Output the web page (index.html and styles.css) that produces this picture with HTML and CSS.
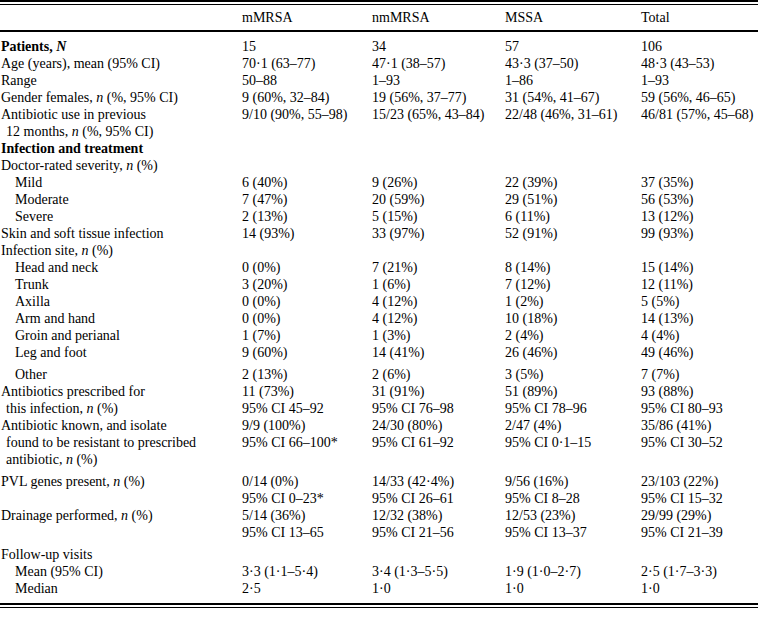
FILE: index.html
```html
<!DOCTYPE html>
<html>
<head>
<meta charset="utf-8">
<link rel="stylesheet" href="styles.css">
</head>
<body>
<div class="frame">
<table class="data">
<colgroup>
<col class="c-label"><col class="c-a"><col class="c-b"><col class="c-c"><col class="c-d">
</colgroup>
<thead>
<tr class="head"><th></th><th>mMRSA</th><th>nmMRSA</th><th>MSSA</th><th>Total</th></tr>
</thead>
<tbody>
<tr class="first"><td class="lbl"><b>Patients, <i>N</i></b></td><td>15</td><td>34</td><td>57</td><td>106</td></tr>
<tr><td class="lbl">Age (years), mean (95% CI)</td><td>70·1 (63–77)</td><td>47·1 (38–57)</td><td>43·3 (37–50)</td><td>48·3 (43–53)</td></tr>
<tr><td class="lbl">Range</td><td>50–88</td><td>1–93</td><td>1–86</td><td>1–93</td></tr>
<tr><td class="lbl">Gender females, <i>n</i> (%, 95% CI)</td><td>9 (60%, 32–84)</td><td>19 (56%, 37–77)</td><td>31 (54%, 41–67)</td><td>59 (56%, 46–65)</td></tr>
<tr><td class="lbl">Antibiotic use in previous<br>12 months, <i>n</i> (%, 95% CI)</td><td>9/10 (90%, 55–98)</td><td>15/23 (65%, 43–84)</td><td>22/48 (46%, 31–61)</td><td>46/81 (57%, 45–68)</td></tr>
<tr><td class="lbl"><b>Infection and treatment</b></td><td></td><td></td><td></td><td></td></tr>
<tr><td class="lbl">Doctor-rated severity, <i>n</i> (%)</td><td></td><td></td><td></td><td></td></tr>
<tr><td class="lbl sub">Mild</td><td>6 (40%)</td><td>9 (26%)</td><td>22 (39%)</td><td>37 (35%)</td></tr>
<tr><td class="lbl sub">Moderate</td><td>7 (47%)</td><td>20 (59%)</td><td>29 (51%)</td><td>56 (53%)</td></tr>
<tr><td class="lbl sub">Severe</td><td>2 (13%)</td><td>5 (15%)</td><td>6 (11%)</td><td>13 (12%)</td></tr>
<tr><td class="lbl">Skin and soft tissue infection</td><td>14 (93%)</td><td>33 (97%)</td><td>52 (91%)</td><td>99 (93%)</td></tr>
<tr><td class="lbl">Infection site, <i>n</i> (%)</td><td></td><td></td><td></td><td></td></tr>
<tr><td class="lbl sub">Head and neck</td><td>0 (0%)</td><td>7 (21%)</td><td>8 (14%)</td><td>15 (14%)</td></tr>
<tr><td class="lbl sub">Trunk</td><td>3 (20%)</td><td>1 (6%)</td><td>7 (12%)</td><td>12 (11%)</td></tr>
<tr><td class="lbl sub">Axilla</td><td>0 (0%)</td><td>4 (12%)</td><td>1 (2%)</td><td>5 (5%)</td></tr>
<tr><td class="lbl sub">Arm and hand</td><td>0 (0%)</td><td>4 (12%)</td><td>10 (18%)</td><td>14 (13%)</td></tr>
<tr><td class="lbl sub">Groin and perianal</td><td>1 (7%)</td><td>1 (3%)</td><td>2 (4%)</td><td>4 (4%)</td></tr>
<tr><td class="lbl sub">Leg and foot</td><td>9 (60%)</td><td>14 (41%)</td><td>26 (46%)</td><td>49 (46%)</td></tr>
<tr class="gap"><td class="lbl sub">Other</td><td>2 (13%)</td><td>2 (6%)</td><td>3 (5%)</td><td>7 (7%)</td></tr>
<tr><td class="lbl">Antibiotics prescribed for<br>this infection, <i>n</i> (%)</td><td>11 (73%)<br>95% CI 45–92</td><td>31 (91%)<br>95% CI 76–98</td><td>51 (89%)<br>95% CI 78–96</td><td>93 (88%)<br>95% CI 80–93</td></tr>
<tr><td class="lbl">Antibiotic known, and isolate<br>found to be resistant to prescribed<br>antibiotic, <i>n</i> (%)</td><td>9/9 (100%)<br>95% CI 66–100*</td><td>24/30 (80%)<br>95% CI 61–92</td><td>2/47 (4%)<br>95% CI 0·1–15</td><td>35/86 (41%)<br>95% CI 30–52</td></tr>
<tr class="gap"><td class="lbl">PVL genes present, <i>n</i> (%)</td><td>0/14 (0%)<br>95% CI 0–23*</td><td>14/33 (42·4%)<br>95% CI 26–61</td><td>9/56 (16%)<br>95% CI 8–28</td><td>23/103 (22%)<br>95% CI 15–32</td></tr>
<tr><td class="lbl">Drainage performed, <i>n</i> (%)</td><td>5/14 (36%)<br>95% CI 13–65</td><td>12/32 (38%)<br>95% CI 21–56</td><td>12/53 (23%)<br>95% CI 13–37</td><td>29/99 (29%)<br>95% CI 21–39</td></tr>
<tr class="gap"><td class="lbl">Follow-up visits</td><td></td><td></td><td></td><td></td></tr>
<tr><td class="lbl sub">Mean (95% CI)</td><td>3·3 (1·1–5·4)</td><td>3·4 (1·3–5·5)</td><td>1·9 (1·0–2·7)</td><td>2·5 (1·7–3·3)</td></tr>
<tr class="last"><td class="lbl sub">Median</td><td>2·5</td><td>1·0</td><td>1·0</td><td>1·0</td></tr>
</tbody>
</table>
</div>
</body>
</html>
```
FILE: styles.css
```css
html, body {
  margin: 0;
  padding: 0;
  background: #fff;
}
body {
  font-family: "Liberation Serif", "Times New Roman", serif;
  font-size: 14px;
  color: #000;
}
.frame {
  width: 758px;
  border-top: 2px solid #000;
  border-bottom: 1px solid #000;
  padding: 2px 0;
}
.data {
  width: 758px;
  border-collapse: collapse;
  table-layout: fixed;
  border-top: 1px solid #000;
  border-bottom: 2px solid #000;
}
.c-label { width: 242px; }
.c-a { width: 130px; }
.c-b { width: 133px; }
.c-c { width: 136px; }
.c-d { width: 117px; }
.data th {
  font-weight: normal;
  text-align: left;
  padding: 0;
  height: 25px;
  vertical-align: middle;
  border-bottom: 2px solid #000;
}
.data td {
  padding: 0;
  line-height: 17px;
  vertical-align: top;
  white-space: nowrap;
}
.data td.lbl {
  padding-left: 6px;
  text-indent: -5px;
}
.data td.sub {
  padding-left: 15px;
  text-indent: 0;
}
.data tr.first td { padding-top: 6px; }
.data tr.gap td { padding-top: 5px; }
.data tr.last td { padding-bottom: 6px; }
```
